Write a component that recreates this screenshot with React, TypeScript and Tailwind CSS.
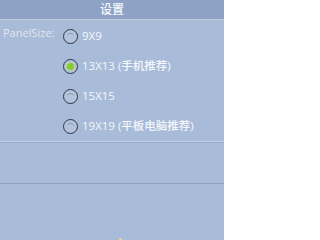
import React from "react";

const options = [
  { label: "9X9", checked: false },
  { label: "13X13 (手机推荐)", checked: true },
  { label: "15X15", checked: false },
  { label: "19X19 (平板电脑推荐)", checked: false },
];

function Radio({ checked }: { checked: boolean }) {
  return (
    <div className="w-[15px] h-[15px] rounded-full border-[1.5px] border-[#2c3646] bg-[#b5c4da] flex items-center justify-center">
      {checked ? (
        <div className="w-[7px] h-[7px] rounded-full bg-[#86cc2e] shadow-[0_0_2px_#b6f060]" />
      ) : (
        <div className="w-[7px] h-[5px] rounded-t-full border-t border-[#8696ad] mb-[1px]" />
      )}
    </div>
  );
}

export default function App() {
  return (
    <div
      className="w-[224px] h-[240px] bg-[#a8bbd8] flex flex-col overflow-hidden"
      style={{ fontFamily: '"Open Sans", "Noto Sans CJK SC", sans-serif' }}
    >
      {/* Title bar */}
      <div className="h-[20px] bg-[#8da2c5] border-b border-[#b9c8de] flex items-center justify-center">
        <span className="text-[12px] leading-none font-medium text-[#f6f8fc]">设置</span>
      </div>

      {/* Panel size options */}
      <div className="flex pt-[1px]">
        <div className="w-[60px] pl-[3px] pt-[3px] text-[11px] leading-[18px] font-medium text-[#e2e7ef]">
          PanelSize:
        </div>
        <div className="flex flex-col">
          {options.map((o) => (
            <div key={o.label} className="h-[30px] flex items-center gap-[4px] pl-[3px]">
              <Radio checked={o.checked} />
              <span className="text-[11.5px] leading-none font-medium text-[#f4f7fb]">{o.label}</span>
            </div>
          ))}
        </div>
      </div>

      <div className="h-[2px] border-t border-[#c3d1e6] border-b-[#97aac8] border-b" />
      <div className="h-[40px]" />
      <div className="h-[1px] bg-[#8fa2c2]" />
      <div className="flex-1 flex items-end justify-center pl-[16px]">
        <div className="w-[3px] h-[2px] rounded-t-full bg-[#e6d88a]" />
      </div>
    </div>
  );
}
